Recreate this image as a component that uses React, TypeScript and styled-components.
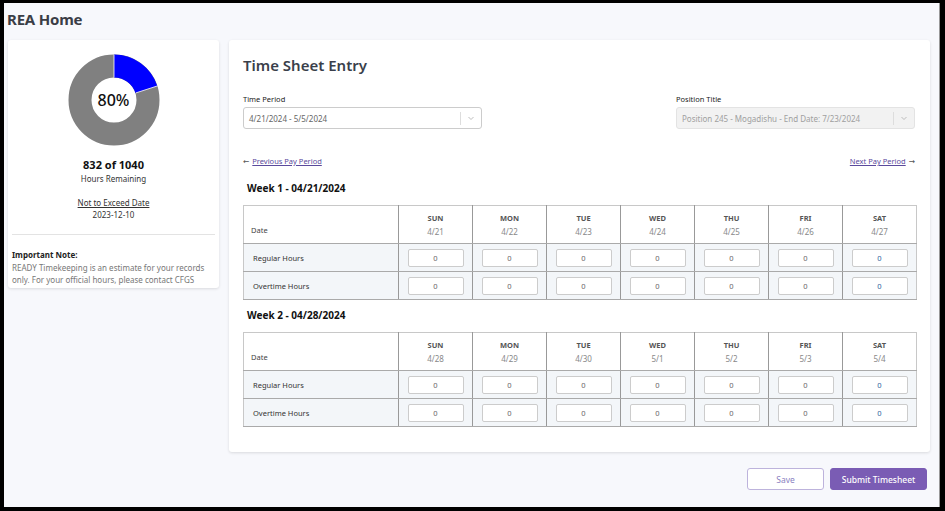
import styled, { createGlobalStyle } from 'styled-components';

const GlobalStyle = createGlobalStyle`
  html, body {
    margin: 0;
    padding: 0;
    background: #000;
  }
  body {
    font-family: 'Noto Sans', 'DejaVu Sans', sans-serif;
    color: #222;
  }
  * { box-sizing: border-box; }
`;

const Frame = styled.div`
  margin: 3px 5px 0 4px;
  width: 936px;
  height: 504px;
  background: #f7f8fc;
  border-right: 1px solid #999;
  padding: 0 0 0 3px;
  overflow: hidden;
`;

const PageTitle = styled.h1`
  margin: 0;
  padding: 6px 0 0 0;
  height: 37px;
  font-size: 15px;
  font-weight: 700;
  color: #3a3d46;
  letter-spacing: -0.2px;
`;

const Layout = styled.div`
  display: flex;
  align-items: flex-start;
  gap: 10px;
  padding-left: 1px;
`;

const Card = styled.div`
  background: #fff;
  border-radius: 3px;
  box-shadow: 0 1px 3px rgba(0, 0, 0, 0.12);
`;

const SideCard = styled(Card)`
  width: 211px;
  height: 248px;
  padding: 14px 4px 0 4px;
  display: flex;
  flex-direction: column;
  align-items: center;
`;

const DonutWrap = styled.div`
  position: relative;
  width: 92px;
  height: 92px;
`;

const DonutLabel = styled.div`
  position: absolute;
  inset: 0;
  display: flex;
  align-items: center;
  justify-content: center;
  font-size: 16px;
  font-weight: 500;
  color: #111;
`;

const Total = styled.div`
  margin-top: 11px;
  font-size: 11px;
  font-weight: 700;
  color: #111;
`;

const Small = styled.div<{ $underline?: boolean; $top?: number }>`
  font-size: 8px;
  color: #333;
  margin-top: ${(p) => p.$top ?? 2}px;
  text-decoration: ${(p) => (p.$underline ? 'underline' : 'none')};
`;

const Divider = styled.hr`
  align-self: stretch;
  margin: 14px 0 0 0;
  border: 0;
  border-top: 1px solid #e3e3e3;
`;

const Note = styled.div`
  align-self: stretch;
  padding: 14px 0 0 0;
  font-size: 8px;
  line-height: 12.5px;
  color: #777;
  & b {
    color: #222;
    font-weight: 700;
  }
`;

const MainCard = styled(Card)`
  width: 701px;
  height: 412px;
  padding: 15px 14px 0 14px;
`;

const MainTitle = styled.h2`
  margin: 0;
  font-size: 15px;
  font-weight: 600;
  color: #3a3f4b;
  height: 39px;
`;

const FieldRow = styled.div`
  display: flex;
  justify-content: space-between;
  padding-right: 1px;
`;

const Field = styled.div`
  width: 239px;
`;

const Label = styled.div`
  font-size: 7.5px;
  color: #222;
  margin-bottom: 3px;
`;

const Select = styled.div<{ $disabled?: boolean }>`
  height: 22px;
  border: 1px solid ${(p) => (p.$disabled ? '#e3e3e3' : '#ccc')};
  border-radius: 3px;
  background: ${(p) => (p.$disabled ? '#f2f2f2' : '#fff')};
  display: flex;
  align-items: center;
  font-size: 8px;
  color: ${(p) => (p.$disabled ? '#a0a0a0' : '#666')};
`;

const SelectValue = styled.div`
  flex: 1;
  padding-left: 5px;
`;

const Sep = styled.div`
  width: 1px;
  height: 13px;
  background: #ddd;
`;

const Chevron = styled.div`
  width: 20px;
  display: flex;
  justify-content: center;
`;

const PagerRow = styled.div`
  display: flex;
  justify-content: space-between;
  margin-top: 27px;
  padding-right: 1px;
`;

const PagerLink = styled.a`
  display: flex;
  align-items: center;
  gap: 3px;
  font-size: 7.5px;
  color: #555;
  & span {
    color: #5a4a9c;
    text-decoration: underline;
  }
`;

const WeekTitle = styled.div<{ $top: number }>`
  margin-top: ${(p) => p.$top}px;
  margin-bottom: 7px;
  padding-left: 4px;
  font-size: 10px;
  font-weight: 700;
  color: #111;
  height: 17px;
`;

const Table = styled.table`
  border-collapse: collapse;
  width: 673px;
  table-layout: fixed;
  border: 1px solid #c8c8c8;
`;

const HeadCell = styled.th<{ $first?: boolean }>`
  height: 38px;
  width: ${(p) => (p.$first ? 155 : 74)}px;
  border-left: 1px solid ${(p) => (p.$first ? '#c8c8c8' : '#999')};
  border-bottom: 1px solid #aaa;
  text-align: ${(p) => (p.$first ? 'left' : 'center')};
  vertical-align: ${(p) => (p.$first ? 'bottom' : 'middle')};
  padding: ${(p) => (p.$first ? '0 0 8px 7px' : '0')};
  font-weight: 400;
  font-size: 7.5px;
  color: #444;
`;

const Day = styled.div`
  font-weight: 700;
  color: #555;
  font-size: 7.5px;
`;

const DateText = styled.div`
  color: #888;
  font-size: 8px;
  margin-top: 3px;
`;

const Row = styled.tr`
  background: #f3f6f9;
`;

const Cell = styled.td<{ $first?: boolean }>`
  height: 28px;
  border-left: 1px solid ${(p) => (p.$first ? '#c8c8c8' : '#999')};
  border-bottom: 1px solid #aaa;
  text-align: ${(p) => (p.$first ? 'left' : 'center')};
  padding: ${(p) => (p.$first ? '0 0 0 9px' : '0')};
  font-size: 7.5px;
  color: #333;
`;

const HourInput = styled.input<{ $accent?: boolean }>`
  width: 56px;
  height: 18px;
  border: 1px solid #ccc;
  border-radius: 2px;
  background: #fff;
  text-align: center;
  font-family: inherit;
  font-size: 7.5px;
  color: ${(p) => (p.$accent ? '#2f5f9e' : '#666')};
  padding: 0;
  display: block;
  margin: 0 auto;
`;

const Actions = styled.div`
  display: flex;
  justify-content: flex-end;
  gap: 6px;
  margin-top: 16px;
  padding-right: 3px;
`;

const Button = styled.button<{ $primary?: boolean }>`
  height: 22px;
  width: ${(p) => (p.$primary ? 97 : 77)}px;
  border-radius: 3px;
  border: 1px solid ${(p) => (p.$primary ? '#7a5cb4' : '#bdb3dc')};
  background: ${(p) => (p.$primary ? '#7a5cb4' : '#fff')};
  color: ${(p) => (p.$primary ? '#fff' : '#8a7fbf')};
  font-family: inherit;
  font-size: 8.5px;
  font-weight: ${(p) => (p.$primary ? 500 : 400)};
  padding: 0;
`;

const days = ['SUN', 'MON', 'TUE', 'WED', 'THU', 'FRI', 'SAT'];

const weeks = [
  { title: 'Week 1 - 04/21/2024', dates: ['4/21', '4/22', '4/23', '4/24', '4/25', '4/26', '4/27'], top: 15 },
  { title: 'Week 2 - 04/28/2024', dates: ['4/28', '4/29', '4/30', '5/1', '5/2', '5/3', '5/4'], top: 8 },
];

const ChevronIcon = () => (
  <svg width="8" height="8" viewBox="0 0 8 8">
    <path d="M1.5 3 L4 5.5 L6.5 3" fill="none" stroke="#b5b5b5" strokeWidth="0.9" />
  </svg>
);

const Donut = () => {
  const r = 34;
  const c = 2 * Math.PI * r;
  const used = 0.2;
  return (
    <DonutWrap>
      <svg width="92" height="92" viewBox="0 0 92 92">
        <g transform="rotate(-90 46 46)">
          <circle cx="46" cy="46" r={r} fill="none" stroke="#808080" strokeWidth="23" />
          <circle
            cx="46"
            cy="46"
            r={r}
            fill="none"
            stroke="#0000ff"
            strokeWidth="23"
            strokeDasharray={`${c * used} ${c}`}
          />
        </g>
        <line x1="46" y1="0.5" x2="46" y2="23.5" stroke="#fff" strokeWidth="0.8" />
        <line x1="67.9" y1="38.9" x2="89.8" y2="31.8" stroke="#fff" strokeWidth="0.8" />
      </svg>
      <DonutLabel>80%</DonutLabel>
    </DonutWrap>
  );
};

const WeekTable = ({ dates }: { dates: string[] }) => (
  <Table>
    <thead>
      <tr>
        <HeadCell $first>Date</HeadCell>
        {days.map((d, i) => (
          <HeadCell key={d}>
            <Day>{d}</Day>
            <DateText>{dates[i]}</DateText>
          </HeadCell>
        ))}
      </tr>
    </thead>
    <tbody>
      {['Regular Hours', 'Overtime Hours'].map((label) => (
        <Row key={label}>
          <Cell $first>{label}</Cell>
          {days.map((d) => (
            <Cell key={d}>
              <HourInput defaultValue="0" $accent={d === 'SAT'} />
            </Cell>
          ))}
        </Row>
      ))}
    </tbody>
  </Table>
);

export default function App() {
  return (
    <>
      <GlobalStyle />
      <Frame>
        <PageTitle>REA Home</PageTitle>
        <Layout>
          <SideCard>
            <Donut />
            <Total>832 of 1040</Total>
            <Small $top={1}>Hours Remaining</Small>
            <Small $underline $top={13}>Not to Exceed Date</Small>
            <Small $top={1}>2023-12-10</Small>
            <Divider />
            <Note>
              <b>Important Note:</b>
              <br />
              READY Timekeeping is an estimate for your records only. For your official hours, please
              contact CFGS
            </Note>
          </SideCard>
          <div>
            <MainCard>
              <MainTitle>Time Sheet Entry</MainTitle>
              <FieldRow>
                <Field>
                  <Label>Time Period</Label>
                  <Select>
                    <SelectValue>4/21/2024 - 5/5/2024</SelectValue>
                    <Sep />
                    <Chevron>
                      <ChevronIcon />
                    </Chevron>
                  </Select>
                </Field>
                <Field>
                  <Label>Position Title</Label>
                  <Select $disabled>
                    <SelectValue>Position 245 - Mogadishu - End Date: 7/23/2024</SelectValue>
                    <Sep />
                    <Chevron>
                      <ChevronIcon />
                    </Chevron>
                  </Select>
                </Field>
              </FieldRow>
              <PagerRow>
                <PagerLink>
                  ← <span>Previous Pay Period</span>
                </PagerLink>
                <PagerLink>
                  <span>Next Pay Period</span> →
                </PagerLink>
              </PagerRow>
              {weeks.map((w) => (
                <div key={w.title}>
                  <WeekTitle $top={w.top}>{w.title}</WeekTitle>
                  <WeekTable dates={w.dates} />
                </div>
              ))}
            </MainCard>
            <Actions>
              <Button>Save</Button>
              <Button $primary>Submit Timesheet</Button>
            </Actions>
          </div>
        </Layout>
      </Frame>
    </>
  );
}
